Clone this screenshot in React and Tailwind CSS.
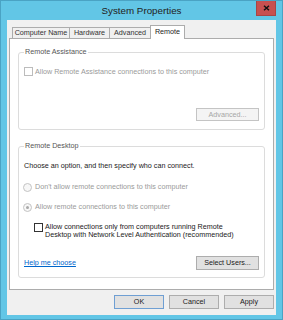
export default function App() {
  const txt = "text-[7.2px] leading-[10px]";
  return (
    <div className="w-[283px] h-[320px] bg-[#62c6e6] border border-[#4aa3c4] flex flex-col font-['Liberation_Sans',Arial,sans-serif] text-[#1a1a1a] overflow-hidden">
      {/* title bar */}
      <div className="h-[19px] grid grid-cols-[1fr_auto_1fr] px-[6px]">
        <div />
        <div className="self-center text-[9.8px] leading-[12px] text-[#222] pt-[1px]">System Properties</div>
        <div className="flex justify-end items-start">
          <div className="w-[20px] h-[15px] bg-[#c75050] border border-t-0 border-[#a84545] flex items-center justify-center">
            <svg width="7" height="6" viewBox="0 0 7 6">
              <path d="M1 0.8 L6 5.2 M6 0.8 L1 5.2" stroke="#111" strokeWidth="1.5" />
            </svg>
          </div>
        </div>
      </div>
      {/* client */}
      <div className="mx-[6px] h-[295px] bg-[#f0f0f0] px-[2px] pt-[5px] flex flex-col">
        {/* tabs */}
        <div className="flex items-end ml-[3px] h-[13px]">
          <div className={`w-[57px] h-[11px] border-t border-l border-[#acacac] bg-[#f0f0f0] flex items-center justify-center text-[#333] ${txt}`}>Computer Name</div>
          <div className={`w-[40px] h-[11px] border-t border-l border-[#acacac] bg-[#f0f0f0] flex items-center justify-center text-[#333] ${txt}`}>Hardware</div>
          <div className={`w-[41px] h-[11px] border-t border-l border-[#acacac] bg-[#f0f0f0] flex items-center justify-center text-[#333] ${txt}`}>Advanced</div>
          <div className={`relative z-10 w-[35px] h-[14px] -mb-px border-t border-l border-r border-[#acacac] bg-white flex items-center justify-center pb-[1px] text-[#222] ${txt}`}>Remote</div>
        </div>
        {/* panel */}
        <div className="h-[252px] bg-white border border-[#acacac] px-[8px] pt-[8px] flex flex-col">
          <fieldset className="border border-[#dcdcdc] rounded-[3px] px-[5px] pb-[8px] flex flex-col">
            <legend className={`px-[1px] text-[#555] ${txt}`}>Remote Assistance</legend>
            <div className="mt-[10px] flex items-center h-[9px]">
              <div className="w-[9px] h-[9px] border border-[#bcbcbc] bg-white" />
              <span className={`ml-[2px] text-[#9a9a9a] ${txt}`}>Allow Remote Assistance connections to this computer</span>
            </div>
            <div className="mt-[32px] flex justify-end">
              <div className={`w-[63px] h-[13px] border border-[#c4c4c4] bg-[#f4f4f4] flex items-center justify-center text-[#a6a6a6] ${txt}`}>Advanced...</div>
            </div>
          </fieldset>
          <fieldset className="mt-[11px] border border-[#dcdcdc] rounded-[3px] px-[5px] pb-[7px] flex flex-col">
            <legend className={`px-[1px] text-[#555] ${txt}`}>Remote Desktop</legend>
            <div className={`mt-[10px] text-[#1a1a1a] ${txt}`}>Choose an option, and then specify who can connect.</div>
            <div className="mt-[11px] h-[10px] flex items-center -ml-[1px]">
              <div className="w-[9px] h-[9px] rounded-full border border-[#c4c4c4] bg-[#f7f7f7]" />
              <span className={`ml-[3px] text-[#9a9a9a] ${txt}`}>Don't allow remote connections to this computer</span>
            </div>
            <div className="mt-[10px] h-[10px] flex items-center -ml-[1px]">
              <div className="w-[9px] h-[9px] rounded-full border border-[#c4c4c4] bg-[#f7f7f7] flex items-center justify-center">
                <div className="w-[3px] h-[3px] rounded-full bg-[#a8a8a8]" />
              </div>
              <span className={`ml-[3px] text-[#9a9a9a] ${txt}`}>Allow remote connections to this computer</span>
            </div>
            <div className="mt-[11px] ml-[10px] flex items-start">
              <div className="w-[9px] h-[9px] border border-[#333] bg-white" />
              <div className="ml-[2px] text-[7.2px] leading-[8px] text-[#1a1a1a] -mt-[0.5px]">
                Allow connections only from computers running Remote<br />
                Desktop with Network Level Authentication (recommended)
              </div>
            </div>
            <div className="mt-[17px] flex items-center justify-between">
              <span className={`text-[#0066cc] underline pt-[1px] ${txt}`}>Help me choose</span>
              <div className={`w-[63px] h-[14px] border border-[#adadad] bg-[#e1e1e1] flex items-center justify-center text-[#1a1a1a] ${txt}`}>Select Users...</div>
            </div>
          </fieldset>
        </div>
        {/* bottom buttons */}
        <div className="mt-[5px] flex justify-end gap-[5px]">
          <div className={`w-[50px] h-[14px] border border-[#6f9fd3] bg-[#e1e1e1] flex items-center justify-center text-[#1a1a1a] ${txt}`}>OK</div>
          <div className={`w-[50px] h-[14px] border border-[#adadad] bg-[#e1e1e1] flex items-center justify-center text-[#1a1a1a] ${txt}`}>Cancel</div>
          <div className={`w-[50px] h-[14px] border border-[#adadad] bg-[#e1e1e1] flex items-center justify-center text-[#1a1a1a] ${txt}`}>Apply</div>
        </div>
      </div>
    </div>
  );
}
